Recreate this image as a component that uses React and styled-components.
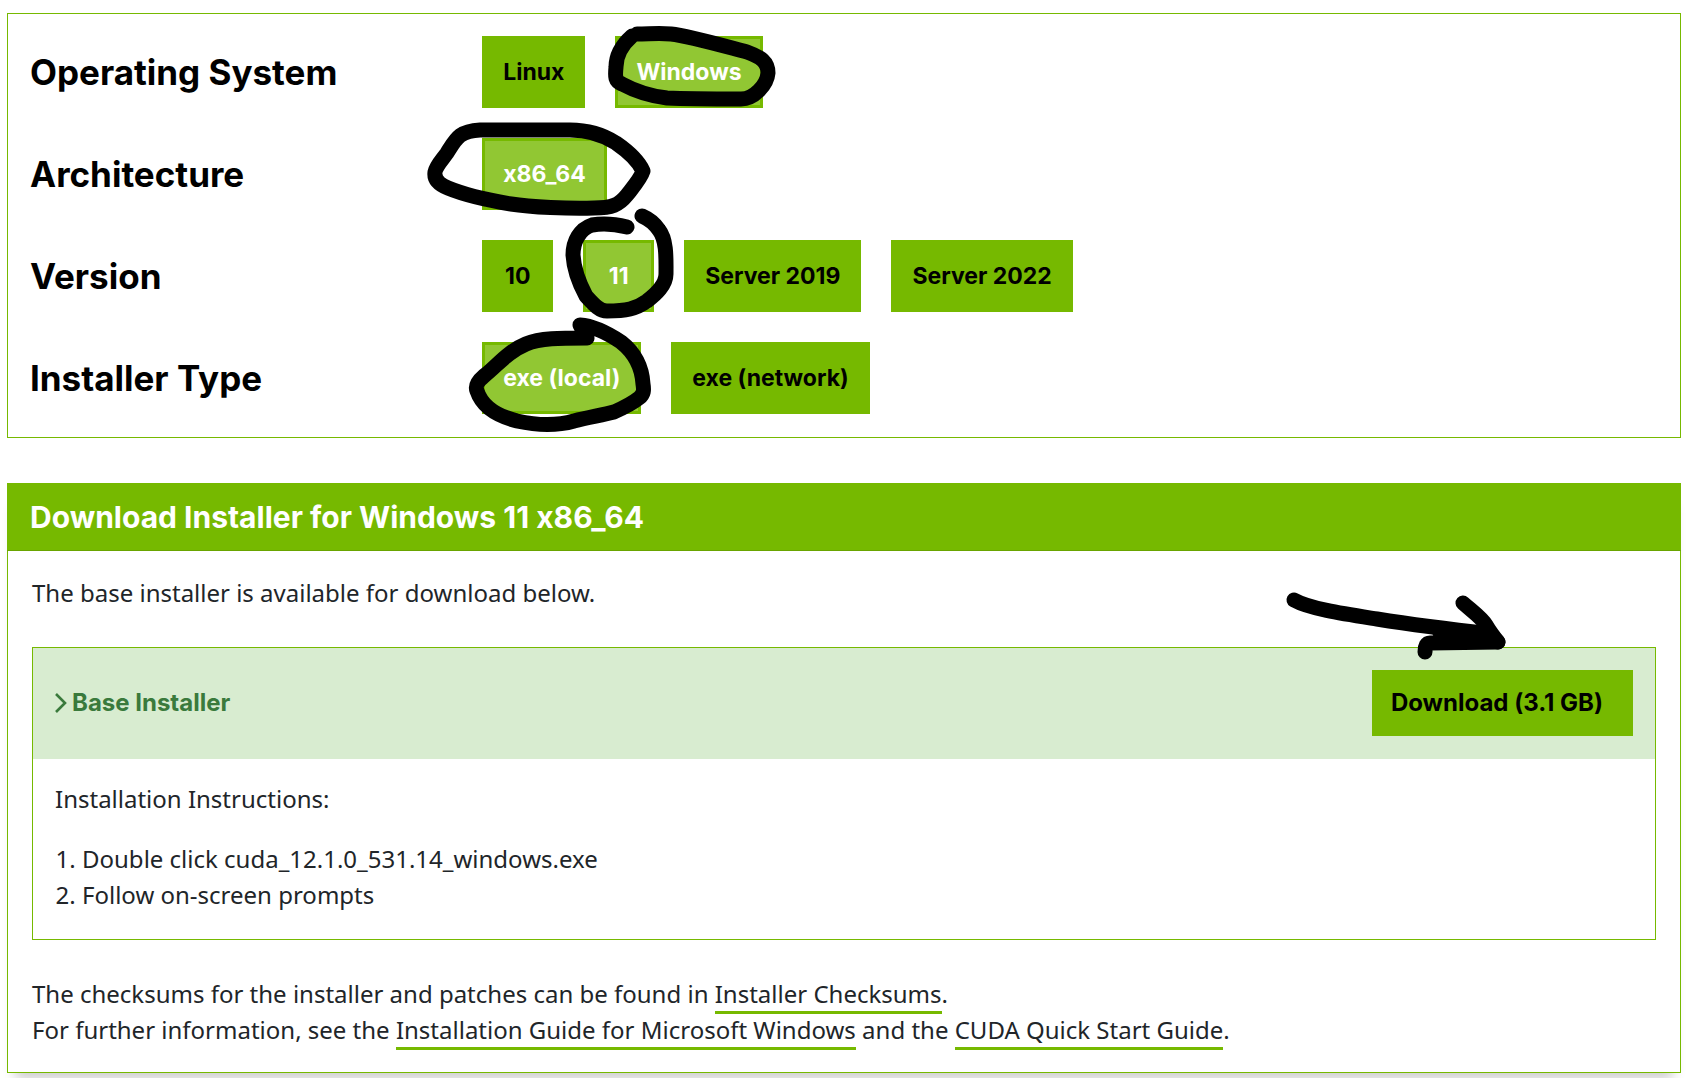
import React, { useState } from 'react';
import styled, { createGlobalStyle, css } from 'styled-components';

const green = '#76b900';
const headingFont = 'Inter, "Liberation Sans", Arial, sans-serif';
const bodyFont = '"Noto Sans", "Liberation Sans", Arial, sans-serif';

const GlobalStyle = createGlobalStyle`
  *, *::before, *::after { box-sizing: border-box; }
  body {
    margin: 0;
    background: #fff;
    color: #212529;
    font-family: ${bodyFont};
    font-size: 24px;
    line-height: 36px;
  }
  button { font: inherit; cursor: pointer; }
  h2, h3, p, ol { margin: 0; }
`;

const Page = styled.main`
  display: flex;
  flex-direction: column;
  gap: 45px;
  padding: 13px 8px 5px 7px;
`;

const Selector = styled.section`
  display: flex;
  flex-direction: column;
  gap: 30px;
  padding: 22px 22px 23px;
  border: 1px solid ${green};
`;

const OptionRow = styled.div`
  display: grid;
  grid-template-columns: 5fr 13fr;
  align-items: center;
`;

const strongText = css`
  font-family: ${headingFont};
  font-weight: 700;
  font-variant-ligatures: no-contextual;
`;

const RowTitle = styled.h3`
  ${strongText}
  color: #000;
  font-size: 35px;
  line-height: 48px;
`;

const Options = styled.div`
  display: flex;
  flex-wrap: wrap;
  gap: 30px;
`;

const solidButton = css`
  ${strongText}
  color: #000;
  background: ${green};
  border: 3px solid ${green};
  border-radius: 0;
`;

const OptionButton = styled.button`
  ${solidButton}
  position: relative;
  min-width: 71px;
  height: 72px;
  padding: 0 18px;
  font-size: 23px;
  ${(p) =>
    p.$selected &&
    css`
      color: #fff;
      background: #91c733;
    `}
`;

const Ink = styled.svg`
  position: absolute;
  top: -3px;
  ${(p) => (p.$end ? 'right' : 'left')}: -3px;
  z-index: 1;
  overflow: visible;
  pointer-events: none;
  fill: none;
  stroke: #000;
  stroke-width: 15px;
  stroke-linecap: round;
  stroke-linejoin: round;
`;

const Card = styled.section`
  border: 1px solid ${green};
  border-top: 0;
  box-shadow: 0 14px 12px -8px rgba(0, 0, 0, 0.2);
`;

const CardHeader = styled.header`
  display: flex;
  align-items: center;
  height: 68px;
  margin-left: -1px;
  margin-right: -1px;
  padding: 0 23px;
  background: ${green};
  border-bottom: 1px solid #69a400;
`;

const CardTitle = styled.h2`
  ${strongText}
  color: #fff;
  font-size: 30px;
  line-height: 36px;
`;

const CardBody = styled.div`
  display: flex;
  flex-direction: column;
  gap: 36px;
  padding: 24px;
`;

const Installer = styled.article`
  border: 1px solid ${green};
`;

const InstallerBar = styled.div`
  display: flex;
  align-items: center;
  justify-content: space-between;
  padding: 22px 22px 23px;
  background: #d8ecd0;
`;

const Toggle = styled.button`
  display: flex;
  align-items: center;
  gap: 5px;
  padding: 0;
  border: 0;
  background: none;
  color: #3a7a3c;
  ${strongText}
`;

const Chevron = styled.svg`
  width: 12px;
  height: 22px;
  fill: none;
  stroke: currentColor;
  stroke-width: 2.6px;
`;

const DownloadButton = styled.button`
  ${solidButton}
  position: relative;
  height: 66px;
  padding: 0 27px 0 16px;
`;

const Instructions = styled.div`
  display: flex;
  flex-direction: column;
  gap: 24px;
  padding: 22px 22px 26px;
`;

const Steps = styled.ol`
  padding-left: 27px;
`;

const TextLink = styled.a`
  color: inherit;
  text-decoration: none;
  padding-bottom: 1px;
  border-bottom: 3px solid ${green};
`;

const groups = [
  { title: 'Operating System', options: ['Linux', 'Windows'], initial: 'Windows' },
  { title: 'Architecture', options: ['x86_64'], initial: 'x86_64' },
  { title: 'Version', options: ['10', '11', 'Server 2019', 'Server 2022'], initial: '11' },
  { title: 'Installer Type', options: ['exe (local)', 'exe (network)'], initial: 'exe (local)' },
];

/* Hand-drawn rings, each in the coordinates of its own button. */
const rings = {
  Windows: {
    box: '616 36 147 72',
    size: [147, 72],
    d: 'M633 36C624 44 617 55 617 67C616 77 616 81 623 84C636 91 650 96 668 98C690 99 720 99 742 99C755 99 768 85 769 73C769 62 762 57 748 52C725 46 690 36 672 34C660 33 650 34 638 34',
  },
  x86_64: {
    box: '482 138 125 72',
    size: [125, 72],
    d: 'M480 130L570 130C588 130 602 134 616 143C629 152 639 162 643 171C641 178 634 186 627 195C619 205 612 208 594 208C570 209 530 207 511 204C487 200 465 195 448 188C438 184 434 179 435 172C436 166 442 160 447 153C456 139 459 131 480 130Z',
  },
  11: {
    box: '583 240 71 72',
    size: [71, 72],
    d: 'M627 227C615 224 603 223 592 225C580 229 573 241 573 255C574 271 579 283 586 296C595 306 600 311 607 311C626 311 636 309 647 301C656 294 666 285 666 274C666 260 667 240 659 230C655 224 649 219 642 216',
  },
  'exe (local)': {
    box: '482 342 158 72',
    size: [158, 72],
    d: 'M587 338C560 338 540 338 526 344C507 352 498 365 484 376C477 382 475 386 477 391C482 406 497 416 517 421C540 426 560 425 574 421C590 417 603 415 614 412C623 408 634 402 639 398C644 394 644 390 643 384C642 367 635 353 621 342C609 334 595 326 580 325L587 338',
  },
};

function OptionGroup({ title, options, initial }) {
  const [value, setValue] = useState(initial);
  return (
    <OptionRow role="group" aria-label={title}>
      <RowTitle>{title}</RowTitle>
      <Options>
        {options.map((option) => {
          const ring = rings[option];
          return (
            <OptionButton
              key={option}
              type="button"
              $selected={option === value}
              aria-pressed={option === value}
              onClick={() => setValue(option)}
            >
              {option}
              {ring && (
                <Ink viewBox={ring.box} width={ring.size[0]} height={ring.size[1]} aria-hidden="true">
                  <path d={ring.d} />
                </Ink>
              )}
            </OptionButton>
          );
        })}
      </Options>
    </OptionRow>
  );
}

export default function App() {
  const [open, setOpen] = useState(true);
  return (
    <>
      <GlobalStyle />
      <Page>
        <Selector>
          {groups.map((group) => (
            <OptionGroup key={group.title} {...group} />
          ))}
        </Selector>

        <Card>
          <CardHeader>
            <CardTitle>Download Installer for Windows 11 x86_64</CardTitle>
          </CardHeader>
          <CardBody>
            <p>The base installer is available for download below.</p>
            <Installer>
              <InstallerBar>
                <Toggle type="button" aria-expanded={open} onClick={() => setOpen(!open)}>
                  <Chevron viewBox="0 0 12 22" aria-hidden="true">
                    <path d="M1 2L10 11L1 20" />
                  </Chevron>
                  Base Installer
                </Toggle>
                <DownloadButton type="button">
                  Download (3.1 GB)
                  <Ink $end viewBox="1373 670 260 66" width="260" height="66" aria-hidden="true">
                    <path d="M1294 600C1310 609 1345 614 1377 619C1415 625 1455 630 1490 634L1498 642" />
                    <path d="M1463 603C1472 611 1482 618 1486 625C1490 632 1494 637 1498 642L1430 643Q1425 643 1425 652" />
                    <path d="M1440 633L1492 637" />
                  </Ink>
                </DownloadButton>
              </InstallerBar>
              {open && (
                <Instructions>
                  <p>Installation Instructions:</p>
                  <Steps>
                    <li>Double click cuda_12.1.0_531.14_windows.exe</li>
                    <li>Follow on-screen prompts</li>
                  </Steps>
                </Instructions>
              )}
            </Installer>
            <p>
              The checksums for the installer and patches can be found in{' '}
              <TextLink href="#checksums">Installer Checksums</TextLink>.
              <br />
              For further information, see the{' '}
              <TextLink href="#windows-guide">Installation Guide for Microsoft Windows</TextLink> and the{' '}
              <TextLink href="#quick-start">CUDA Quick Start Guide</TextLink>.
            </p>
          </CardBody>
        </Card>
      </Page>
    </>
  );
}
